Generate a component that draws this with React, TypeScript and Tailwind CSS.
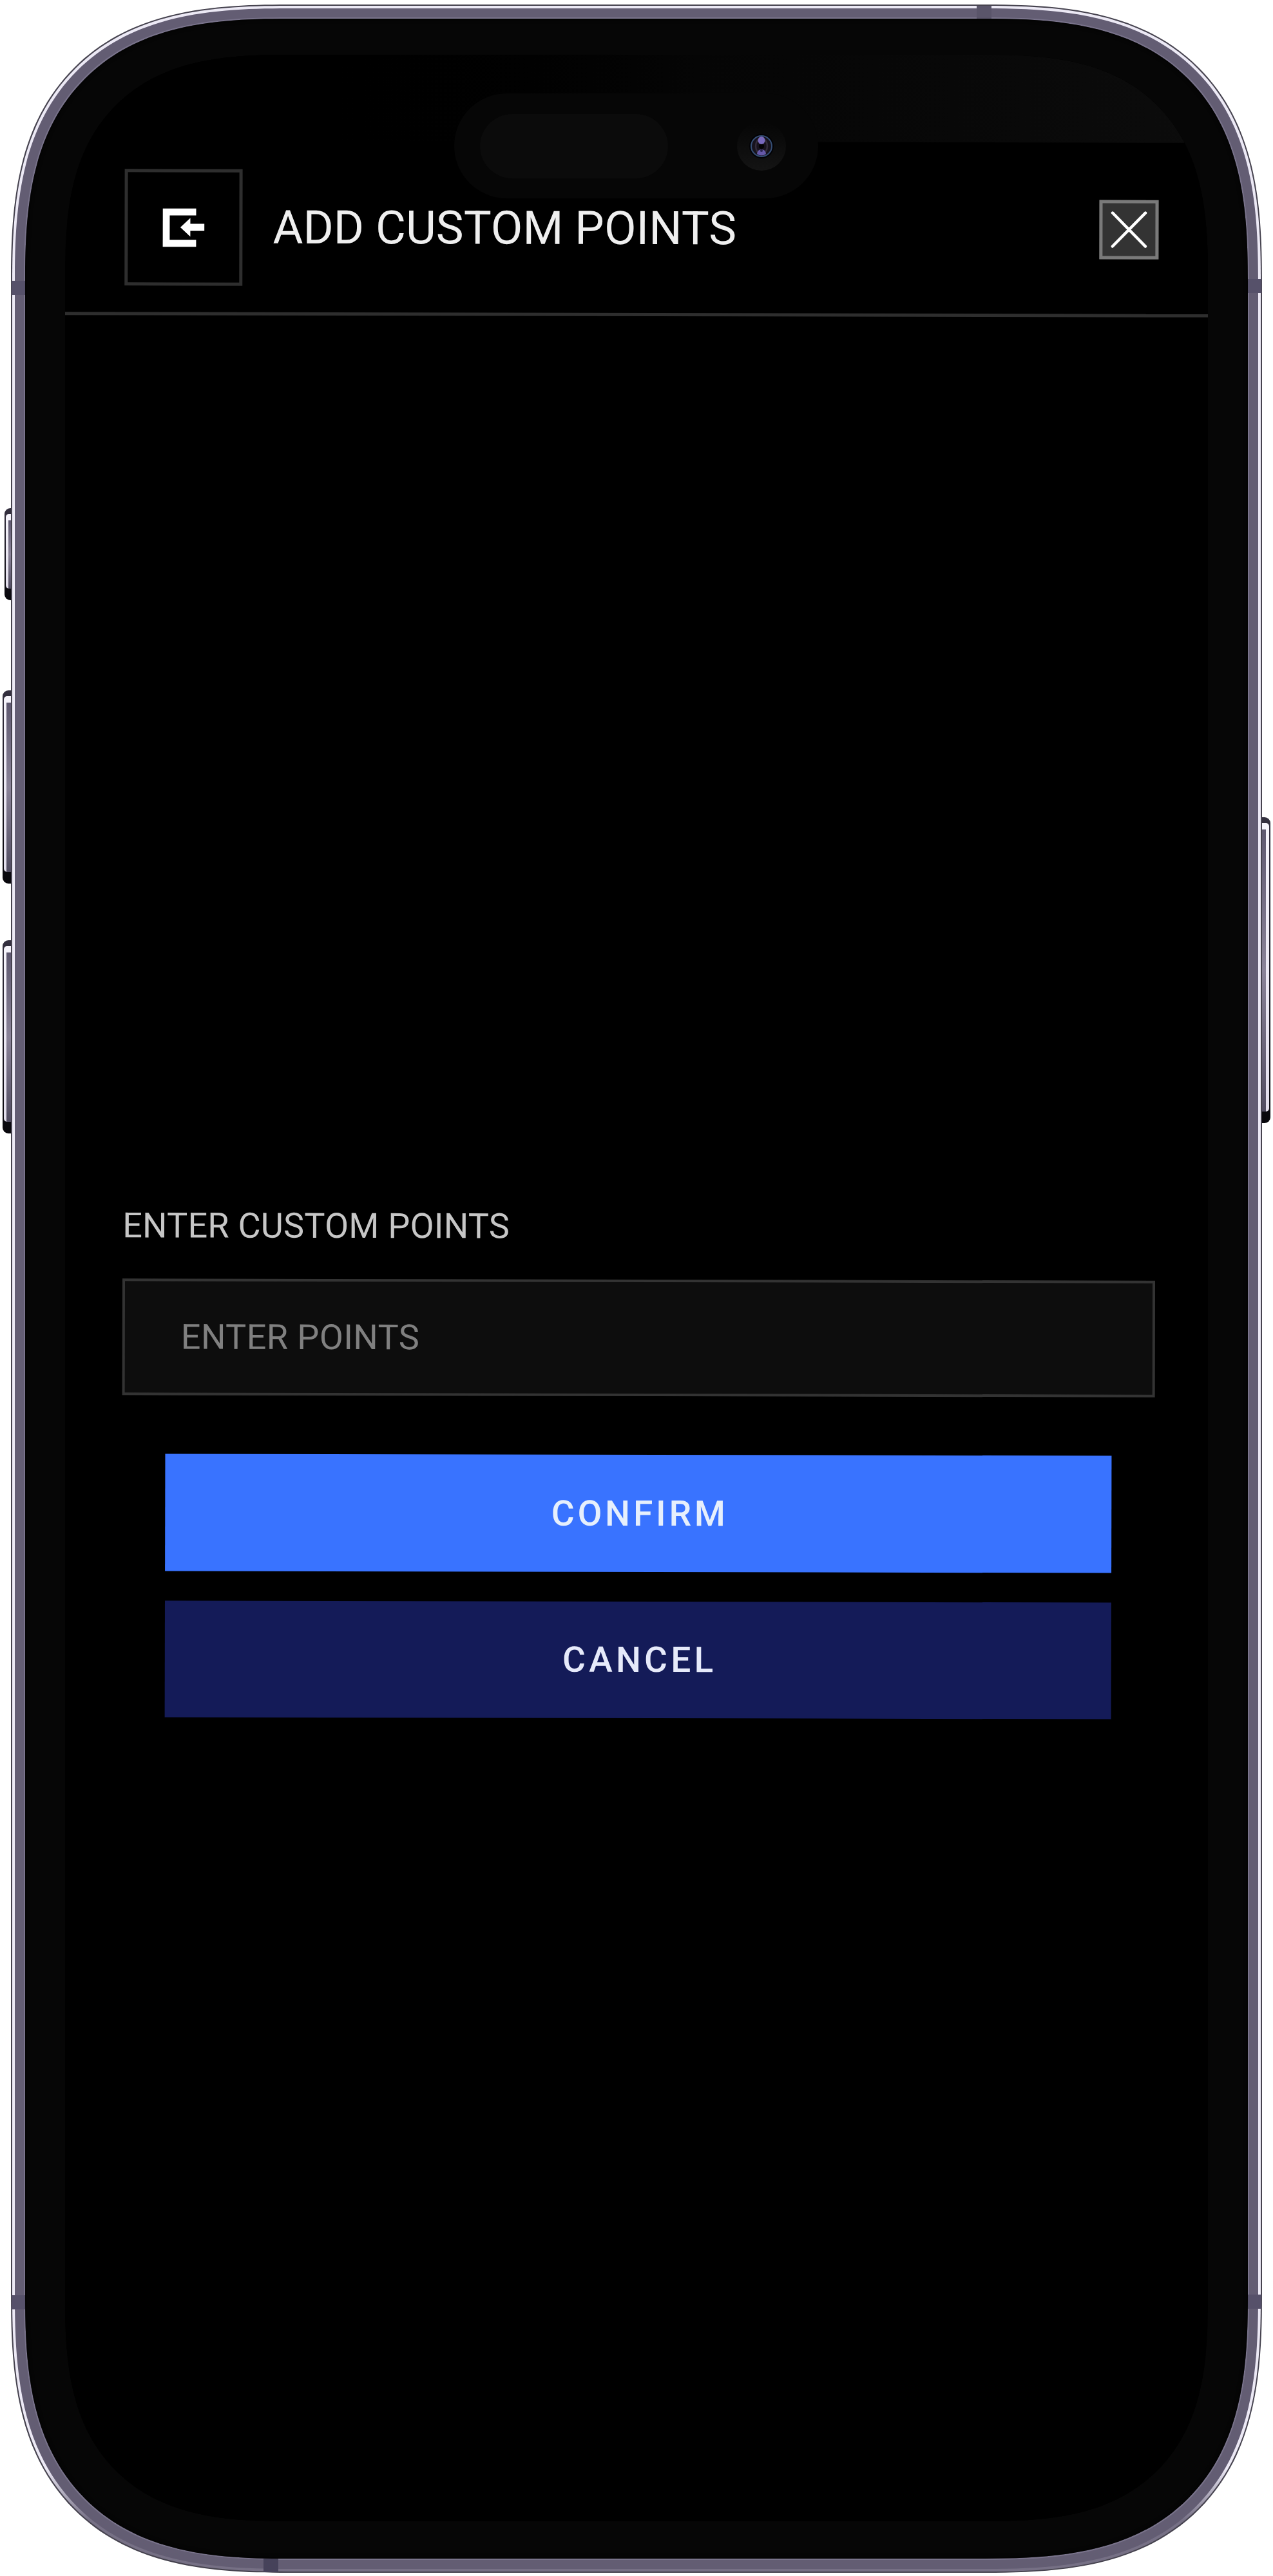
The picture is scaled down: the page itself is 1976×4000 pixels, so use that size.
import React from "react";

function BackIcon() {
  return (
    <svg width="65" height="60" viewBox="0 0 65 60" fill="#fff">
      <path d="M0 0H52V11H11V49H52V60H0Z" />
      <path d="M27.500 29.500L43 15V24H65V35H43V44Z" />
    </svg>
  );
}

function CloseIcon() {
  return (
    <svg width="58" height="58" viewBox="0 0 58 58" fill="none" stroke="#fff" strokeWidth="4.500" strokeLinecap="round">
      <path d="M3.500 3L54.500 55M54.500 3L3.500 55" />
    </svg>
  );
}

function CameraIsland() {
  return (
    <div className="absolute left-[604px] top-[60px] flex h-[163px] w-[565px] items-center justify-between rounded-full bg-[#060606] pl-10 pr-[50px]">
      <div className="h-[100px] w-[292px] rounded-full bg-[#0b0b0b]" />
      <div className="flex h-[76px] w-[76px] items-center justify-center rounded-full bg-linear-to-b from-[#060606] to-[#141414]">
        <svg width="38" height="38" viewBox="0 0 38 38">
          <circle cx="19" cy="19" r="19" fill="#020205" />
          <circle cx="19" cy="19" r="16" fill="#17131d" stroke="#344d73" strokeWidth="2" />
          <ellipse cx="19" cy="19" rx="9" ry="12" fill="none" stroke="#332c3b" strokeWidth="2.500" />
          <circle cx="19" cy="19" r="4" fill="#030204" />
          <ellipse cx="19" cy="10" rx="5.500" ry="6" fill="#7869bd" />
          <path d="M12 31Q13 24 19 24T26 31Q19 36 12 31Z" fill="#6558a8" />
          <circle cx="19" cy="26" r="2" fill="#2b2550" />
        </svg>
      </div>
    </div>
  );
}

function SideKey({ className, flip = false }: { className: string; flip?: boolean }) {
  return (
    <div
      className={
        "absolute overflow-hidden bg-linear-to-b from-[#34303f] to-[#08070c] pt-[9px] pb-[18px] " +
        (flip ? "rounded-r-[9px] pr-[2px] " : "rounded-l-[9px] pl-[2px] ") +
        className
      }
    >
      <div className={"h-full bg-linear-to-b from-[#f6f4fb] to-[#e2deec] pt-[10px] " + (flip ? "rounded-tr-[5px] rounded-br-[5px] pr-[5px]" : "rounded-tl-[5px] rounded-bl-[5px] pl-[4px]")}>
        <div className="h-full bg-linear-to-b from-[#5f5970] via-[#8a8398] to-[#514c61]" />
      </div>
    </div>
  );
}

function Screen() {
  return (
    <div className="flex h-full origin-center rotate-[0.12deg] flex-col bg-black">
      <div className="-mx-1 -mt-1 h-[139px] shrink-0 bg-linear-to-r from-black from-20% via-[#050505] via-55% to-[#0c0c0c]" />
      <header className="-mx-1 flex h-[271px] shrink-0 items-center border-b-[5px] border-[#2e2e2e] pt-[3px] pl-[93px] pr-[84px]">
        <button className="flex h-[181px] w-[183px] items-center justify-center border-[5px] border-[#2e2e2e] bg-black">
          <BackIcon />
        </button>
        <h1 className="ml-[47px] text-[72px] leading-none tracking-[0.1px] whitespace-nowrap text-[#efefef]">ADD CUSTOM POINTS</h1>
        <button className="ml-auto flex h-[92px] w-[92px] items-center justify-center border-[5px] border-[#7a7a7a] bg-[#333]">
          <CloseIcon />
        </button>
      </header>
      <main className="flex flex-1 flex-col pt-[1382px] pl-[89px] pr-[82px]">
        <label htmlFor="points" className="text-[54px] leading-[64px] tracking-[0.2px] text-[#c6c6c6]">
          ENTER CUSTOM POINTS
        </label>
        <input
          id="points"
          placeholder="ENTER POINTS"
          className="mt-[50px] h-[181px] w-full border-[4px] border-[#333] bg-[#0d0d0d] px-[87px] text-[54px] tracking-[0.4px] text-white placeholder:text-[#808080]"
        />
        <div className="mt-[91px] flex flex-col gap-[46px] px-[67px]">
          <button className="h-[182px] bg-[#3973ff] pl-[5px] text-[55px] font-medium tracking-[4.8px] text-[#e6effc]">CONFIRM</button>
          <button className="h-[181px] bg-[#141b58] pl-[5px] text-[55px] font-medium tracking-[5.2px] text-[#e6eafa]">CANCEL</button>
        </div>
      </main>
    </div>
  );
}

export default function App() {
  return (
    <div className="relative h-[4000px] w-[1976px] overflow-hidden bg-white pt-[7px] pl-[17px] font-[Roboto,'Liberation_Sans',sans-serif]">
      <SideKey className="left-[7px] top-[789px] h-[143px] w-[12px]" />
      <SideKey className="left-[4px] top-[1072px] h-[300px] w-[14px]" />
      <SideKey className="left-[4px] top-[1460px] h-[300px] w-[14px]" />
      <SideKey flip className="left-[1958px] top-[1269px] h-[475px] w-[14px]" />

      <div className="relative h-[3988px] w-[1942px] rounded-[345px] bg-[#46434f] p-[2px] supports-[corner-shape:squircle]:rounded-[430px] supports-[corner-shape:squircle]:[corner-shape:superellipse(1.42)]">
        <div className="h-full rounded-[343px] bg-linear-to-b from-[#ece9f5] from-96% to-[#767085] to-98% p-[4px] supports-[corner-shape:squircle]:rounded-[428px] supports-[corner-shape:squircle]:[corner-shape:superellipse(1.42)]">
          <div className="h-full rounded-[339px] bg-[#635d73] p-[14px] supports-[corner-shape:squircle]:rounded-[424px] supports-[corner-shape:squircle]:[corner-shape:superellipse(1.42)]">
            <div className="h-full rounded-[325px] bg-[#79738b] p-[2px] supports-[corner-shape:squircle]:rounded-[410px] supports-[corner-shape:squircle]:[corner-shape:superellipse(1.42)]">
              <div className="h-full rounded-[323px] bg-[#060606] pt-[56px] pr-[62px] pb-[58px] pl-[62px] shadow-[inset_0_0_6px_#000] supports-[corner-shape:squircle]:rounded-[408px] supports-[corner-shape:squircle]:[corner-shape:superellipse(1.42)]">
                <div className="relative h-full overflow-hidden rounded-[270px] bg-black supports-[corner-shape:squircle]:rounded-[345px] supports-[corner-shape:squircle]:[corner-shape:superellipse(1.42)]">
                  <Screen />
                  <CameraIsland />
                </div>
              </div>
            </div>
          </div>
        </div>
      </div>

      <div className="absolute left-[18px] top-[436px] h-[22px] w-[21px] bg-[#56516a]" />
      <div className="absolute left-[1937px] top-[433px] h-[22px] w-[21px] bg-[#56516a]" />
      <div className="absolute left-[18px] top-[3564px] h-[22px] w-[21px] bg-[#56516a]" />
      <div className="absolute left-[1937px] top-[3563px] h-[22px] w-[21px] bg-[#56516a]" />
      <div className="absolute left-[1516px] top-[9px] h-[20px] w-[23px] bg-[#5a556a]" />
      <div className="absolute left-[409px] top-[3973px] h-[21px] w-[23px] bg-[#46425a]" />
    </div>
  );
}
